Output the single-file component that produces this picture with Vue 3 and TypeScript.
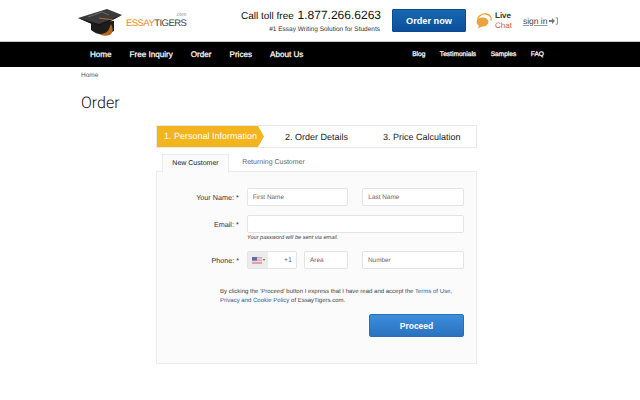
<script setup lang="ts">
const mainNav = ["Home", "Free Inquiry", "Order", "Prices", "About Us"];
const subNav = ["Blog", "Testimonials", "Samples", "FAQ"];
</script>

<template>
  <div class="page">
    <header class="top">
      <div class="logo">
        <svg class="cap" width="46" height="30" viewBox="0 0 46 30">
          <path d="M13 15 L13 23 Q22 31 36 24 L36 14 Z" fill="#1c1c1c" />
          <path d="M33 17 Q37 24 32 28 Q25 30 21 27 Q29 27 31 22 Z" fill="#b5651d" />
          <path d="M0 11 L29 2 L44 8 L21 20 Z" fill="#3b3b3b" />
          <path d="M0 11 L21 20 L44 8 L21 17 Z" fill="#161616" />
          <path d="M10 10 L24 5 L31 8" fill="none" stroke="#6b6b6b" stroke-width="1" />
          <path d="M21 11 L36 13" fill="none" stroke="#c47a2c" stroke-width="0.8" />
        </svg>
        <div class="brand">
          <span class="com">.com</span>
          <span class="name"><span class="essay">ESSAY</span>TIGERS</span>
        </div>
      </div>

      <div class="call">
        <div class="call-line">Call toll free <span class="phone">1.877.266.6263</span></div>
        <div class="call-sub">#1 Essay Writing Solution for Students</div>
      </div>

      <button class="order-btn">Order now</button>

      <div class="chat">
        <svg width="17" height="17" viewBox="0 0 17 17">
          <path d="M2 9 C1 4 6 1.5 10 2 C14 2.5 16 5.500 15 8.500" fill="none" stroke="#f0a030" stroke-width="1.300" />
          <ellipse cx="6.500" cy="10" rx="6" ry="4.500" fill="#eda33c" />
          <path d="M3 13 L2 16.500 L7 14 Z" fill="#eda33c" />
        </svg>
        <div class="chat-text">
          <span class="live">Live</span>
          <span class="chat-word">Chat</span>
        </div>
      </div>

      <div class="signin">
        <a>sign in</a>
        <svg width="9" height="8" viewBox="0 0 9 8">
          <path d="M0 3 H3 V1 L6 4 L3 7 V5 H0 Z" fill="#777" />
          <path d="M6.500 0.800 H8.500 V7.200 H6.500" fill="none" stroke="#999" stroke-width="1" />
        </svg>
      </div>
    </header>

    <nav class="nav">
      <ul class="nav-main">
        <li v-for="item in mainNav" :key="item">{{ item }}</li>
      </ul>
      <ul class="nav-sub">
        <li v-for="item in subNav" :key="item">{{ item }}</li>
      </ul>
    </nav>

    <main class="content">
      <div class="crumb">Home</div>
      <h1 class="title">Order</h1>

      <section class="wizard">
        <div class="steps">
          <div class="step active">1. Personal Information</div>
          <div class="step second">2. Order Details</div>
          <div class="step third">3. Price Calculation</div>
        </div>

        <div class="tabs">
          <div class="tab current">New Customer</div>
          <div class="tab">Returning Customer</div>
        </div>

        <form class="panel" @submit.prevent>
          <div class="row">
            <label class="label">Your Name: *</label>
            <div class="field half">First Name</div>
            <div class="field half">Last Name</div>
          </div>

          <div class="row email-row">
            <label class="label">Email: *</label>
            <div class="field wide"></div>
          </div>
          <div class="hint">Your password will be sent via email.</div>

          <div class="row phone-row">
            <label class="label">Phone: *</label>
            <div class="field code">
              <span class="flag-box">
                <svg width="10" height="7" viewBox="0 0 10 7">
                  <rect width="10" height="7" fill="#e8a0a8" />
                  <rect y="1.400" width="10" height="1" fill="#f4e4e6" />
                  <rect y="3.800" width="10" height="1" fill="#f4e4e6" />
                  <rect width="5" height="3.600" fill="#5a6fb0" />
                </svg>
                <i class="caret"></i>
              </span>
              <span class="plus">+1</span>
            </div>
            <div class="field area">Area</div>
            <div class="field half">Number</div>
          </div>

          <p class="terms">
            By clicking the 'Proceed' button I express that I have read and accept the
            <a>Terms of Use</a>,<br />
            <a>Privacy and Cookie Policy</a> of EssayTigers.com.
          </p>

          <div class="actions">
            <button class="proceed">Proceed</button>
          </div>
        </form>
      </section>
    </main>
  </div>
</template>

<style scoped>
.page {
  width: 640px;
  height: 400px;
  overflow: hidden;
  background: #fff;
  font-family: "Liberation Sans", Arial, sans-serif;
  color: #222;
  text-rendering: geometricPrecision;
}

.top {
  height: 42px;
  box-sizing: border-box;
  display: flex;
  align-items: center;
  padding-left: 78px;
  border-bottom: 1px solid #c8c8c8;
}

.logo {
  width: 108px;
  flex: none;
  display: flex;
  align-items: center;
  gap: 2px;
  margin-top: 2px;
}

.cap {
  flex: none;
}

.brand {
  display: flex;
  flex-direction: column;
  align-items: flex-end;
  margin-top: -1px;
}

.com {
  font-size: 5px;
  line-height: 5px;
  color: #888;
}

.name {
  font-size: 9.500px;
  line-height: 11px;
  letter-spacing: -0.550px;
  color: #444;
}

.essay {
  color: #ee8a2a;
}

.call {
  width: 139px;
  flex: none;
  margin-left: 55px;
  text-align: right;
  white-space: nowrap;
}

.call-line {
  font-size: 10px;
  line-height: 15px;
  color: #111;
}

.phone {
  font-size: 12px;
  margin-left: 1px;
}

.call-sub {
  font-size: 6.500px;
  line-height: 9px;
  margin-top: 1px;
  color: #333;
}

.order-btn {
  width: 74px;
  height: 23px;
  flex: none;
  margin-left: 12px;
  border: 1px solid #0d4a94;
  border-radius: 1px;
  background: linear-gradient(#1668b0, #0c4f9c);
  color: #fff;
  font: bold 9.200px "Liberation Sans", Arial, sans-serif;
  padding: 0;
}

.chat {
  display: flex;
  align-items: center;
  gap: 2px;
  margin-left: 10px;
}

.chat-text {
  display: flex;
  flex-direction: column;
  font-size: 8px;
  line-height: 10px;
}

.live {
  font-weight: bold;
  color: #333;
}

.chat-word {
  color: #d2622a;
}

.signin {
  display: flex;
  align-items: center;
  gap: 2px;
  margin-left: 11px;
  font-size: 8.500px;
  color: #444;
}

.signin a {
  text-decoration: underline;
  text-decoration-color: #999;
}

.nav {
  height: 25px;
  background: #000;
  display: flex;
  align-items: center;
  justify-content: space-between;
  padding: 0 96px 0 90px;
  color: #fff;
}

.nav ul {
  display: flex;
  margin: 0;
  padding: 0;
  list-style: none;
  -webkit-text-stroke: 0.250px #fff;
}

.nav-main {
  gap: 18px;
  font-size: 8.100px;
}

.nav-sub {
  gap: 14.500px;
  font-size: 6.600px;
}

.content {
  padding: 0 0 0 81px;
}

.crumb {
  margin-top: 5px;
  font-size: 6.500px;
  line-height: 8px;
  color: #555;
}

.title {
  margin: 13px 0 0;
  font-family: Roboto, "Liberation Sans", sans-serif;
  font-size: 16px;
  line-height: 20px;
  font-weight: 300;
  color: #111;
}

.wizard {
  width: 321px;
  margin: 12px 0 0 75px;
}

.steps {
  height: 23px;
  box-sizing: border-box;
  display: flex;
  align-items: center;
  border: 1px solid #e8e8e8;
  font-size: 9px;
  color: #222;
}

.step {
  white-space: nowrap;
}

.step.active {
  width: 107px;
  height: 21px;
  box-sizing: border-box;
  padding-left: 7px;
  line-height: 21px;
  color: #fff;
  background: #f2b51d;
  clip-path: polygon(0 0, 101px 0, 107px 50%, 101px 100%, 0 100%);
}

.step.second {
  margin-left: 21px;
}

.step.third {
  margin-left: 35px;
}

.tabs {
  height: 18px;
  margin-top: 6px;
  padding-left: 6px;
  display: flex;
  font-size: 7px;
  color: #666;
}

.tab {
  width: 67px;
  box-sizing: border-box;
  text-align: center;
  line-height: 18px;
  white-space: nowrap;
}

.tab + .tab {
  width: 89px;
}

.tab.current {
  height: 19px;
  color: #222;
  background: #fbfbfb;
  border: 1px solid #ececec;
  border-bottom: 0;
  position: relative;
  z-index: 1;
}

.panel {
  height: 193px;
  box-sizing: border-box;
  margin-top: -1px;
  padding: 16px 12px 0 0;
  background: #fbfbfb;
  border: 1px solid #ececec;
}

.row {
  display: flex;
  align-items: center;
  height: 18px;
}

.label {
  width: 82px;
  margin-right: 8px;
  text-align: right;
  font-size: 7.200px;
  color: #333;
}

.field {
  height: 18px;
  box-sizing: border-box;
  border: 1px solid #e4e4e4;
  border-radius: 2px;
  background: #fff;
  font-size: 6.400px;
  line-height: 17px;
  padding-left: 5px;
  color: #666;
}

.half {
  width: 102px;
}

.half + .half,
.area + .half {
  margin-left: 14px;
}

.wide {
  width: 218px;
}

.email-row {
  margin-top: 9px;
}

.hint {
  margin: 1px 0 0 90px;
  font-size: 5.600px;
  line-height: 8px;
  font-style: italic;
  color: #444;
}

.phone-row {
  margin-top: 9px;
}

.code {
  width: 50px;
  display: flex;
  align-items: center;
  justify-content: space-between;
  padding: 0 4px 0 0;
}

.flag-box {
  width: 20px;
  height: 16px;
  background: #ececec;
  display: flex;
  align-items: center;
  justify-content: center;
  gap: 1px;
}

.caret {
  border: 1.500px solid transparent;
  border-top: 2px solid #555;
  border-bottom: 0;
}

.plus {
  font-size: 7px;
}

.area {
  width: 44px;
  margin-left: 7px;
}

.terms {
  margin: 19px 0 0 63px;
  font-size: 6px;
  line-height: 9px;
  color: #444;
  white-space: nowrap;
}

.terms a {
  color: #2f5b94;
}

.actions {
  display: flex;
  justify-content: flex-end;
  margin-top: 8px;
}

.proceed {
  width: 95px;
  height: 23px;
  padding: 0;
  border: 1px solid #2a6eb5;
  border-radius: 2px;
  background: linear-gradient(#3c8edd, #2a72bd);
  color: #fff;
  font: bold 8.500px "Liberation Sans", Arial, sans-serif;
}
</style>
